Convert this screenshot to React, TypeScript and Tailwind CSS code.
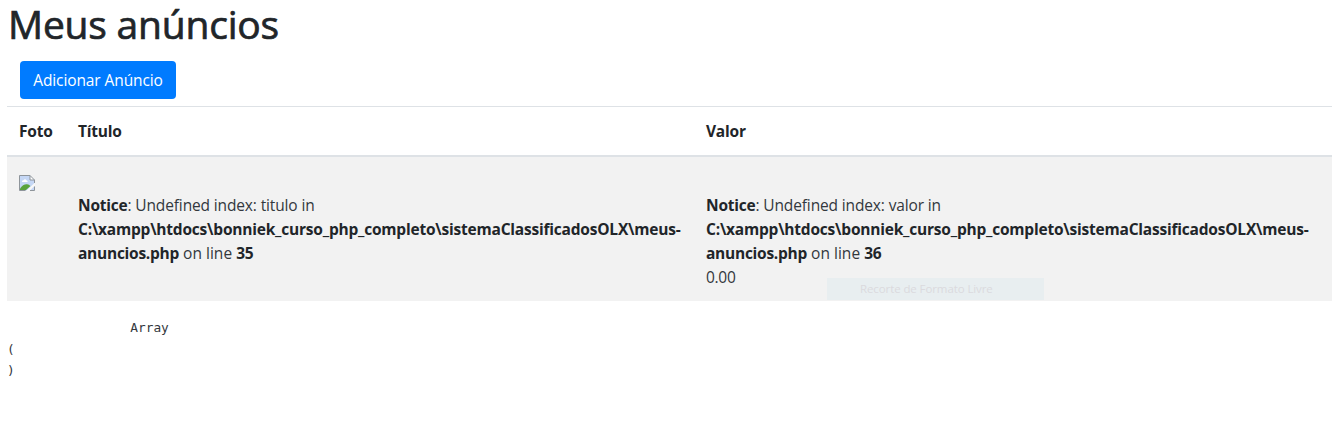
import React from "react";

function BrokenImage() {
  return (
    <svg width="16" height="16" viewBox="0 0 16 16" role="img" aria-label="Foto" className="mt-[6px] block">
      <path d="M0.5 0.5H11L15.5 5V15.5H0.5Z" fill="#c5d7f5" />
      <path d="M1 15V13.5C3 10.5 5.5 9 8 9.2C9.5 9.4 10.5 10 11.5 11L7 15Z" fill="#5aa33c" />
      <path d="M3 7C3 5.6 4 5.3 4.6 5.3C5 4 7 4 7.3 5.2C8.4 5.2 8.6 6 8.6 7Z" fill="#fff" />
      <path d="M11 0.5V5H15.5Z" fill="#fff" />
      <path d="M7 16L16 7.5V10.5L10.5 16Z" fill="#f8f8f8" />
      <path d="M6.5 15.5H0.5V0.5H11L15.5 5V8M11 0.5V5H15.5M15.5 11.5V15.5H11" fill="none" stroke="#8f959b" />
    </svg>
  );
}

function Notice({ field, line }: { field: string; line: string }) {
  return (
    <div className="pt-6 tracking-[-0.21px] whitespace-nowrap">
      <div>
        <b>Notice</b>
        <span className="tracking-[-0.14px] text-[#33383d]">: Undefined index: {field} in</span>
      </div>
      <div>
        <b>C:\xampp\htdocs\bonniek_curso_php_completo\sistemaClassificadosOLX\meus-</b>
      </div>
      <div>
        <b className="tracking-[-0.26px]">anuncios.php</b>
        <span className="text-[#33383d] tracking-[0.02px]"> on line </span>
        <b>{line}</b>
      </div>
    </div>
  );
}

export default function App() {
  return (
    <main className="h-[444px] bg-white pl-[7px] font-['Open_Sans','Noto_Sans',sans-serif] text-[15.5px] leading-6 text-[#212529]">
      <h1 className="h-12 pl-px text-[39px] leading-[48px] tracking-[-0.2px] whitespace-nowrap [-webkit-text-stroke:0.7px_#212529]">
        Meus anúncios
      </h1>
      <button className="mt-[13px] ml-[13px] block h-[38px] w-[156px] rounded bg-[#007bff] text-center tracking-[-0.1px] whitespace-nowrap text-white">
        Adicionar Anúncio
      </button>
      <div className="mt-[7px]">
        <div className="grid h-[51px] grid-cols-[59px_628px_1fr] border-t border-b-2 border-t-[#dee2e6] border-b-[#dee2e6] pt-3 font-bold tracking-[-0.2px]">
          <div className="pl-3">Foto</div>
          <div className="pl-3">Título</div>
          <div className="pl-3">Valor</div>
        </div>
        <div className="relative grid h-36 grid-cols-[59px_628px_1fr] bg-[#f2f2f2] pt-3">
          <div className="pl-3"><BrokenImage /></div>
          <div className="pl-3"><Notice field="titulo" line="35" /></div>
          <div className="pl-3">
            <Notice field="valor" line="36" />
            <div className="tracking-[-0.3px] text-[#33383d]">0.00</div>
          </div>
          <div className="absolute top-[121px] left-[820px] h-[22px] w-[217px] bg-[#e8eef0] pl-[33px] text-[11.5px] leading-[22px] tracking-[-0.1px] text-[#dbdade]">
            Recorte de Formato Livre
          </div>
        </div>
      </div>
      <pre className="mt-4 font-['DejaVu_Sans_Mono',monospace] text-[12.8px] leading-[21px] text-[#33383d]">{"                Array\n(\n)"}</pre>
    </main>
  );
}
